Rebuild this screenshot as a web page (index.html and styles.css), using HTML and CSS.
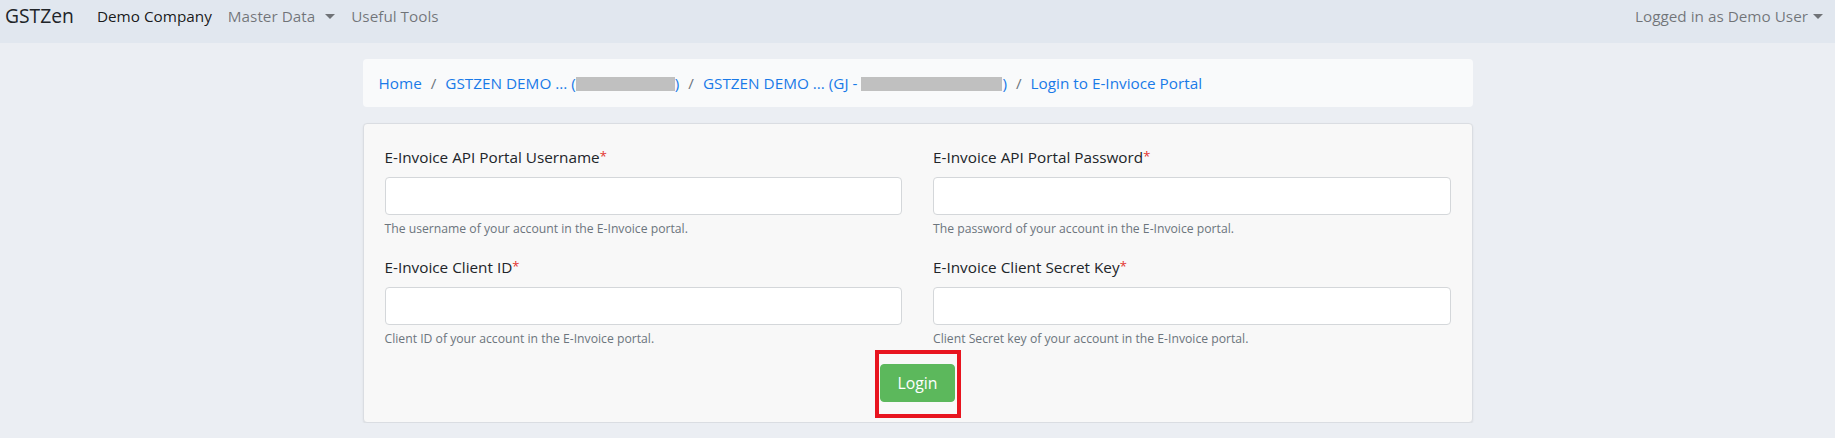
FILE: index.html
```html
<!DOCTYPE html>
<html lang="en">
<head>
    <meta charset="UTF-8">
    <meta name="viewport" content="width=device-width, initial-scale=1.0">
    <title>Login to E-Invioce Portal - GSTZen</title>
    <link rel="stylesheet" href="styles.css">
</head>
<body>
    <nav class="navbar">
        <a href="#" class="brand">GSTZen</a>
        <ul class="nav-links">
            <li><a href="#" class="nav-link active">Demo Company</a></li>
            <li><a href="#" class="nav-link dropdown">Master Data</a></li>
            <li><a href="#" class="nav-link">Useful Tools</a></li>
        </ul>
        <div class="nav-user">
            <a href="#" class="nav-link dropdown user-toggle">Logged in as Demo User</a>
        </div>
    </nav>

    <div class="container">
        <ol class="breadcrumb">
            <li><a href="#">Home</a></li>
            <li><a href="#">GSTZEN DEMO ... (<span class="redacted redacted-short"></span>)</a></li>
            <li><a href="#">GSTZEN DEMO ... (GJ - <span class="redacted redacted-long"></span>)</a></li>
            <li><a href="#">Login to E-Invioce Portal</a></li>
        </ol>

        <div class="card">
            <form class="login-form">
                <div class="form-grid">
                    <div class="form-group">
                        <label for="username">E-Invoice API Portal Username<span class="asterisk">*</span></label>
                        <input type="text" id="username" class="form-control">
                        <small class="help-text">The username of your account in the E-Invoice portal.</small>
                    </div>
                    <div class="form-group">
                        <label for="password">E-Invoice API Portal Password<span class="asterisk">*</span></label>
                        <input type="password" id="password" class="form-control">
                        <small class="help-text">The password of your account in the E-Invoice portal.</small>
                    </div>
                    <div class="form-group">
                        <label for="client-id">E-Invoice Client ID<span class="asterisk">*</span></label>
                        <input type="text" id="client-id" class="form-control">
                        <small class="help-text">Client ID of your account in the E-Invoice portal.</small>
                    </div>
                    <div class="form-group">
                        <label for="client-secret">E-Invoice Client Secret Key<span class="asterisk">*</span></label>
                        <input type="text" id="client-secret" class="form-control">
                        <small class="help-text">Client Secret key of your account in the E-Invoice portal.</small>
                    </div>
                </div>
                <div class="form-actions">
                    <span class="highlight-wrap">
                        <button type="submit" class="btn-login">Login</button>
                        <span class="highlight"></span> <!-- red annotation box -->
                    </span>
                </div>
            </form>
        </div>
    </div>
</body>
</html>
```

FILE: styles.css
```css
html, body {
    margin: 0;
    padding: 0;
}

body {
    font-family: "Open Sans", "Segoe UI", Roboto, sans-serif;
    font-size: 15.3px;
    line-height: 24px;
    color: #212529;
    background-color: #ebeef3;
}

a {
    text-decoration: none;
}

/* top navbar */
.navbar {
    display: flex;
    align-items: center;
    height: 43px;
    box-sizing: border-box;
    padding: 0 12px 11px 5px;
    background-color: #e1e7ef;
}

.brand {
    font-size: 19.3px;
    line-height: 30px;
    color: #212529;
    margin-right: 15px;
}

.nav-links {
    display: flex;
    list-style: none;
    margin: 0;
    padding: 0;
}

.nav-link {
    display: block;
    padding: 0 8px;
    color: rgba(0, 0, 0, 0.5);
}

.nav-link.active {
    color: rgba(0, 0, 0, 0.9);
}

.dropdown::after {
    content: "";
    display: inline-block;
    margin-left: 10px;
    vertical-align: 3px;
    border-top: 5px solid;
    border-left: 5px solid transparent;
    border-right: 5px solid transparent;
}

.nav-user {
    margin-left: auto;
}

.user-toggle {
    padding-right: 0;
}

.user-toggle::after {
    margin-left: 5px;
}

/* page body */
.container {
    width: 1110px;
    margin: 16px auto 0;
}

.breadcrumb {
    display: flex;
    list-style: none;
    margin: 0 0 16px;
    padding: 12px 16px;
    background-color: #f9fafb;
    border-radius: 4px;
}

.breadcrumb li + li::before {
    content: "/";
    padding: 0 9px;
    color: #6c757d;
}

.breadcrumb a {
    color: #1a7ae8;
}

.redacted {
    display: inline-block;
    height: 14px;
    vertical-align: -2px;
    background-color: #c0c0c0;
}

.redacted-short {
    width: 99px;
}

.redacted-long {
    width: 141px;
}

.card {
    background-color: #f8f8f8;
    border: 1px solid #dadde2;
    border-radius: 4px;
    box-shadow: 0 1px 2px rgba(0, 0, 0, 0.08);
    padding: 20px 21px;
}

.form-grid {
    display: grid;
    grid-template-columns: 1fr 1fr;
    column-gap: 31px;
}

.form-group {
    margin-bottom: 16px;
}

.form-group label {
    display: block;
    margin-bottom: 8px;
}

.asterisk {
    color: #e3342f;
    font-size: 13px;
    vertical-align: 2px;
}

.form-control {
    display: block;
    width: 100%;
    height: 38px;
    box-sizing: border-box;
    padding: 6px 12px;
    font: inherit;
    background-color: #fff;
    border: 1px solid #d4d7da;
    border-radius: 4px;
}

.help-text {
    display: block;
    margin-top: 4px;
    font-size: 12.2px;
    line-height: 19px;
    color: #6c757d;
}

.form-actions {
    display: flex;
    justify-content: center;
}

.highlight-wrap {
    position: relative;
    display: inline-block;
}

.btn-login {
    display: block;
    height: 38px;
    padding: 0 16px;
    font: inherit;
    font-size: 15.8px;
    color: #fff;
    background-color: #5cb85c;
    border: 1px solid #5cb85c;
    border-radius: 4px;
    cursor: pointer;
}

.highlight {
    position: absolute;
    left: -5px;
    top: -14px;
    width: 86px;
    height: 68px;
    box-sizing: border-box;
    border: 4px solid #e8141f;
    pointer-events: none;
}
```
